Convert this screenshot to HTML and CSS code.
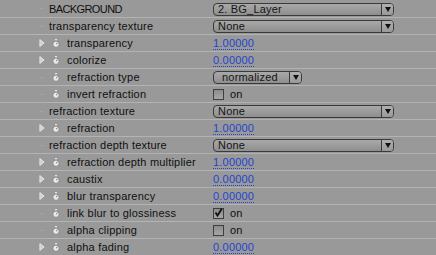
FILE: index.html
```html
<!DOCTYPE html>
<html>
<head>
<meta charset="utf-8">
<link rel="stylesheet" href="styles.css">
</head>
<body>
<div class="panel">
  <div class="row">
    <div class="name"><span class="tw"><i class="dot"></i></span><span class="label group caps">BACKGROUND</span></div>
    <div class="val"><div class="dd wide"><span class="dd-text">2. BG_Layer</span><span class="dd-arrow"></span></div></div>
  </div>
  <div class="row">
    <div class="name"><span class="tw"><i class="dot"></i></span><span class="label group">transparency texture</span></div>
    <div class="val"><div class="dd wide"><span class="dd-text">None</span><span class="dd-arrow"></span></div></div>
  </div>
  <div class="row">
    <div class="name"><span class="tw"><svg class="tri" width="7" height="10" viewBox="0 0 7 10"><path d="M1 1 L6 5 L1 9 Z" fill="#cfcfcf" stroke="#efefef" stroke-width="0.9"/></svg></span><span class="watch"><svg width="8" height="9" viewBox="0 0 8 9"><rect x="3" y="0" width="2" height="1.5" fill="#e6e6e6"/><circle cx="4" cy="5.2" r="3.2" fill="#e8e8e8" stroke="#7a7a7a" stroke-width="0.8"/><path d="M4 5.2 L5.6 3.8" stroke="#555" stroke-width="0.8"/></svg></span><span class="label">transparency</span></div>
    <div class="val"><span class="num">1.00000</span></div>
  </div>
  <div class="row">
    <div class="name"><span class="tw"><svg class="tri" width="7" height="10" viewBox="0 0 7 10"><path d="M1 1 L6 5 L1 9 Z" fill="#cfcfcf" stroke="#efefef" stroke-width="0.9"/></svg></span><span class="watch"><svg width="8" height="9" viewBox="0 0 8 9"><rect x="3" y="0" width="2" height="1.5" fill="#e6e6e6"/><circle cx="4" cy="5.2" r="3.2" fill="#e8e8e8" stroke="#7a7a7a" stroke-width="0.8"/><path d="M4 5.2 L5.6 3.8" stroke="#555" stroke-width="0.8"/></svg></span><span class="label">colorize</span></div>
    <div class="val"><span class="num">0.00000</span></div>
  </div>
  <div class="row">
    <div class="name"><span class="tw"><i class="dot"></i></span><span class="watch"><svg width="8" height="9" viewBox="0 0 8 9"><rect x="3" y="0" width="2" height="1.5" fill="#e6e6e6"/><circle cx="4" cy="5.2" r="3.2" fill="#e8e8e8" stroke="#7a7a7a" stroke-width="0.8"/><path d="M4 5.2 L5.6 3.8" stroke="#555" stroke-width="0.8"/></svg></span><span class="label">refraction type</span></div>
    <div class="val"><div class="dd small"><span class="dd-text">normalized</span><span class="dd-arrow"></span></div></div>
  </div>
  <div class="row">
    <div class="name"><span class="tw"><i class="dot"></i></span><span class="watch"><svg width="8" height="9" viewBox="0 0 8 9"><rect x="3" y="0" width="2" height="1.5" fill="#e6e6e6"/><circle cx="4" cy="5.2" r="3.2" fill="#e8e8e8" stroke="#7a7a7a" stroke-width="0.8"/><path d="M4 5.2 L5.6 3.8" stroke="#555" stroke-width="0.8"/></svg></span><span class="label">invert refraction</span></div>
    <div class="val"><span class="cb"></span><span class="on">on</span></div>
  </div>
  <div class="row">
    <div class="name"><span class="tw"><i class="dot"></i></span><span class="label group">refraction texture</span></div>
    <div class="val"><div class="dd wide"><span class="dd-text">None</span><span class="dd-arrow"></span></div></div>
  </div>
  <div class="row">
    <div class="name"><span class="tw"><svg class="tri" width="7" height="10" viewBox="0 0 7 10"><path d="M1 1 L6 5 L1 9 Z" fill="#cfcfcf" stroke="#efefef" stroke-width="0.9"/></svg></span><span class="watch"><svg width="8" height="9" viewBox="0 0 8 9"><rect x="3" y="0" width="2" height="1.5" fill="#e6e6e6"/><circle cx="4" cy="5.2" r="3.2" fill="#e8e8e8" stroke="#7a7a7a" stroke-width="0.8"/><path d="M4 5.2 L5.6 3.8" stroke="#555" stroke-width="0.8"/></svg></span><span class="label">refraction</span></div>
    <div class="val"><span class="num">1.00000</span></div>
  </div>
  <div class="row">
    <div class="name"><span class="tw"><i class="dot"></i></span><span class="label group">refraction depth texture</span></div>
    <div class="val"><div class="dd wide"><span class="dd-text">None</span><span class="dd-arrow"></span></div></div>
  </div>
  <div class="row">
    <div class="name"><span class="tw"><svg class="tri" width="7" height="10" viewBox="0 0 7 10"><path d="M1 1 L6 5 L1 9 Z" fill="#cfcfcf" stroke="#efefef" stroke-width="0.9"/></svg></span><span class="watch"><svg width="8" height="9" viewBox="0 0 8 9"><rect x="3" y="0" width="2" height="1.5" fill="#e6e6e6"/><circle cx="4" cy="5.2" r="3.2" fill="#e8e8e8" stroke="#7a7a7a" stroke-width="0.8"/><path d="M4 5.2 L5.6 3.8" stroke="#555" stroke-width="0.8"/></svg></span><span class="label">refraction depth multiplier</span></div>
    <div class="val"><span class="num">1.00000</span></div>
  </div>
  <div class="row">
    <div class="name"><span class="tw"><svg class="tri" width="7" height="10" viewBox="0 0 7 10"><path d="M1 1 L6 5 L1 9 Z" fill="#cfcfcf" stroke="#efefef" stroke-width="0.9"/></svg></span><span class="watch"><svg width="8" height="9" viewBox="0 0 8 9"><rect x="3" y="0" width="2" height="1.5" fill="#e6e6e6"/><circle cx="4" cy="5.2" r="3.2" fill="#e8e8e8" stroke="#7a7a7a" stroke-width="0.8"/><path d="M4 5.2 L5.6 3.8" stroke="#555" stroke-width="0.8"/></svg></span><span class="label">caustix</span></div>
    <div class="val"><span class="num">0.00000</span></div>
  </div>
  <div class="row">
    <div class="name"><span class="tw"><svg class="tri" width="7" height="10" viewBox="0 0 7 10"><path d="M1 1 L6 5 L1 9 Z" fill="#cfcfcf" stroke="#efefef" stroke-width="0.9"/></svg></span><span class="watch"><svg width="8" height="9" viewBox="0 0 8 9"><rect x="3" y="0" width="2" height="1.5" fill="#e6e6e6"/><circle cx="4" cy="5.2" r="3.2" fill="#e8e8e8" stroke="#7a7a7a" stroke-width="0.8"/><path d="M4 5.2 L5.6 3.8" stroke="#555" stroke-width="0.8"/></svg></span><span class="label">blur transparency</span></div>
    <div class="val"><span class="num">0.00000</span></div>
  </div>
  <div class="row">
    <div class="name"><span class="tw"><i class="dot"></i></span><span class="watch"><svg width="8" height="9" viewBox="0 0 8 9"><rect x="3" y="0" width="2" height="1.5" fill="#e6e6e6"/><circle cx="4" cy="5.2" r="3.2" fill="#e8e8e8" stroke="#7a7a7a" stroke-width="0.8"/><path d="M4 5.2 L5.6 3.8" stroke="#555" stroke-width="0.8"/></svg></span><span class="label">link blur to glossiness</span></div>
    <div class="val"><span class="cb"><svg width="11" height="11" viewBox="0 0 11 11"><path d="M2.5 5.5 L4.5 8.5 L8.8 1.8" fill="none" stroke="#111" stroke-width="1.8"/></svg></span><span class="on">on</span></div>
  </div>
  <div class="row">
    <div class="name"><span class="tw"><i class="dot"></i></span><span class="watch"><svg width="8" height="9" viewBox="0 0 8 9"><rect x="3" y="0" width="2" height="1.5" fill="#e6e6e6"/><circle cx="4" cy="5.2" r="3.2" fill="#e8e8e8" stroke="#7a7a7a" stroke-width="0.8"/><path d="M4 5.2 L5.6 3.8" stroke="#555" stroke-width="0.8"/></svg></span><span class="label">alpha clipping</span></div>
    <div class="val"><span class="cb"></span><span class="on">on</span></div>
  </div>
  <div class="row">
    <div class="name"><span class="tw"><svg class="tri" width="7" height="10" viewBox="0 0 7 10"><path d="M1 1 L6 5 L1 9 Z" fill="#cfcfcf" stroke="#efefef" stroke-width="0.9"/></svg></span><span class="watch"><svg width="8" height="9" viewBox="0 0 8 9"><rect x="3" y="0" width="2" height="1.5" fill="#e6e6e6"/><circle cx="4" cy="5.2" r="3.2" fill="#e8e8e8" stroke="#7a7a7a" stroke-width="0.8"/><path d="M4 5.2 L5.6 3.8" stroke="#555" stroke-width="0.8"/></svg></span><span class="label">alpha fading</span></div>
    <div class="val"><span class="num">0.00000</span></div>
  </div>
</div>
</body>
</html>
```
FILE: styles.css
```css
html, body {
  margin: 0;
  padding: 0;
  background: #999999;
}
body {
  font-family: "Liberation Sans", Arial, sans-serif;
  font-size: 11px;
  letter-spacing: 0.2px;
  color: #101010;
  width: 436px;
  height: 255px;
  overflow: hidden;
}
.panel {
  display: flex;
  flex-direction: column;
}
.row {
  display: flex;
  align-items: center;
  height: 16px;
  line-height: 16px;
  border-top: 1px solid #b3b3b3;
}
.row:first-child {
  border-top: none;
  height: 17px;
}
.name {
  width: 213px;
  flex: none;
  display: flex;
  align-items: center;
  padding-left: 38px;
  box-sizing: border-box;
  white-space: nowrap;
  overflow: hidden;
}
.tw {
  width: 7px;
  height: 16px;
  display: flex;
  align-items: center;
  justify-content: center;
  flex: none;
}
.tri {
  display: block;
  margin-left: 1px;
}
.dot {
  display: block;
  width: 1px;
  height: 1px;
  background: #b9b9b9;
}
.watch {
  width: 8px;
  height: 9px;
  margin-left: 7px;
  margin-right: 7px;
  flex: none;
  display: block;
}
.watch svg {
  display: block;
}
.label.group {
  margin-left: 4px;
}
.label.caps {
  letter-spacing: -0.6px;
}
.val {
  display: flex;
  align-items: center;
  height: 16px;
}
.num {
  color: #1f44d0;
  line-height: 11px;
  border-bottom: 1px dotted #1f44d0;
  margin-top: 2px;
}
.dd {
  display: flex;
  align-items: stretch;
  height: 13px;
  box-sizing: border-box;
  border: 1px solid #3a3a3a;
  border-radius: 4px;
  background: linear-gradient(#a9a9a9, #8e8e8e);
  margin-top: 1px;
  overflow: hidden;
}
.dd.wide { width: 181px; }
.dd.small { width: 89px; }
.dd-text {
  flex: 1;
  line-height: 11px;
  padding-left: 4px;
  color: #141414;
}
.dd.small .dd-text {
  padding-left: 8px;
}
.dd-arrow {
  width: 11px;
  flex: none;
  border-left: 1px solid #3a3a3a;
  background: linear-gradient(#b0b0b0, #999);
  position: relative;
}
.dd-arrow::after {
  content: "";
  position: absolute;
  left: 3px;
  top: 3px;
  border-left: 3px solid transparent;
  border-right: 3px solid transparent;
  border-top: 5px solid #111;
}
.cb {
  width: 11px;
  height: 11px;
  box-sizing: border-box;
  border: 1px solid #3f3f3f;
  background: linear-gradient(#8c8c8c, #a6a6a6);
  display: block;
  position: relative;
}
.cb svg {
  position: absolute;
  left: -1px;
  top: -2px;
}
.on {
  margin-left: 6px;
}
```
